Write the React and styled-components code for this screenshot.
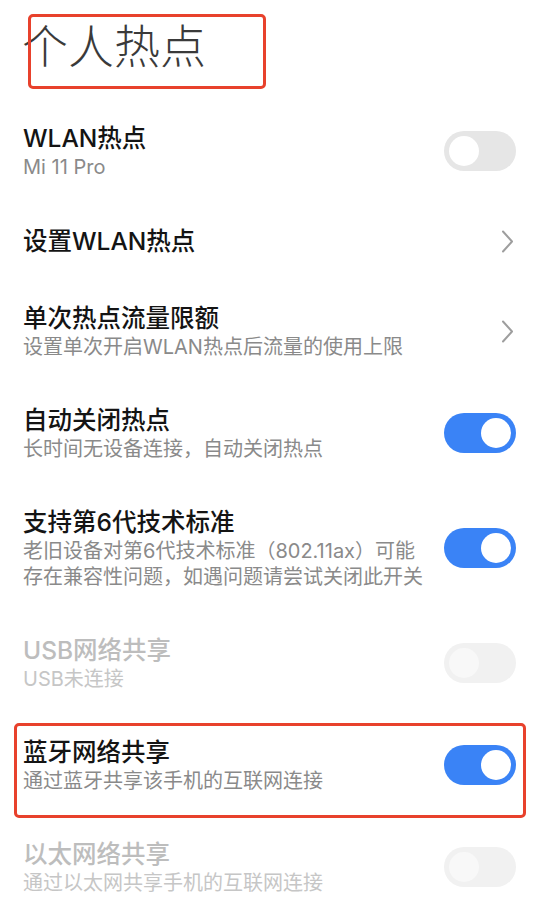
import React from "react";
import styled, { createGlobalStyle, css } from "styled-components";

const GlobalStyle = createGlobalStyle`
  html, body {
    margin: 0;
    padding: 0;
    background: #ffffff;
  }
  body {
    font-family: Inter, "Noto Sans CJK SC", "Noto Sans", sans-serif;
    -webkit-font-smoothing: antialiased;
  }
`;

const Screen = styled.div`
  width: 555px;
  min-height: 922px;
  background: #ffffff;
  overflow: hidden;
`;

const Header = styled.header`
  position: relative;
  padding: 20px 22px 34px;
`;

const PageTitle = styled.h1`
  margin: 0;
  font-family: "Noto Sans CJK SC", sans-serif;
  font-size: 46px;
  line-height: 46px;
  font-weight: 300;
  color: #3a3a3a;
  letter-spacing: 0;
`;

/* red annotation frame drawn over the content */
const Marker = styled.span`
  position: absolute;
  border: 3px solid #e8412c;
  border-radius: 5px;
  pointer-events: none;
  box-sizing: border-box;
`;

const HeaderMarker = styled(Marker)`
  left: 28px;
  top: 14px;
  width: 238px;
  height: 75px;
`;

const List = styled.div`
  display: flex;
  flex-direction: column;
`;

const Row = styled.div`
  position: relative;
  display: flex;
  align-items: center;
  gap: 16px;
  padding: 22px 39px 22px 23px;
  min-height: ${(p) => (p.$compact ? "34px" : "auto")};
`;

const RowMarker = styled(Marker)`
  left: 14px;
  right: 29px;
  top: 9px;
  bottom: -2px;
`;

const TextBlock = styled.div`
  flex: 1;
  min-width: 0;
  display: flex;
  flex-direction: column;
`;

const Title = styled.div`
  font-size: 24.5px;
  line-height: 32px;
  font-weight: 500;
  color: ${(p) => (p.$disabled ? "#bdbdbd" : "#141414")};
  white-space: nowrap;
`;

const Subtitle = styled.div`
  font-size: 20px;
  line-height: 26px;
  font-weight: 400;
  color: ${(p) => (p.$disabled ? "#c6c6c6" : "#8a8a8a")};
  white-space: nowrap;
`;

const Track = styled.div`
  flex: none;
  position: relative;
  width: 72px;
  height: 40px;
  border-radius: 20px;
  box-sizing: border-box;
  display: flex;
  align-items: center;
  padding: 0 5px;
  justify-content: ${(p) => (p.$on ? "flex-end" : "flex-start")};
  ${(p) =>
    p.$on
      ? css`
          background: #3a83f6;
        `
      : p.$disabled
      ? css`
          background: #f1f1f1;
        `
      : css`
          background: #e6e6e6;
        `}
`;

const Knob = styled.span`
  width: 30px;
  height: 30px;
  border-radius: 50%;
  background: ${(p) => (p.$disabled ? "#f8f8f8" : "#ffffff")};
`;

const ChevronBox = styled.div`
  flex: none;
  width: 24px;
  height: 24px;
  display: flex;
  align-items: center;
  justify-content: flex-end;
  margin-right: 2px;
`;

const Switch = ({ on, disabled }) => (
  <Track $on={on} $disabled={disabled}>
    <Knob $disabled={disabled} />
  </Track>
);

const Chevron = () => (
  <ChevronBox>
    <svg width="13" height="23" viewBox="0 0 13 23" fill="none">
      <path
        d="M2 1.5 L11 11.5 L2 21.5"
        stroke="#9e9e9e"
        strokeWidth="2"
        strokeLinecap="round"
        strokeLinejoin="round"
      />
    </svg>
  </ChevronBox>
);

const items = [
  { title: "WLAN热点", sub: ["Mi 11 Pro"], control: "switch", on: false },
  { title: "设置WLAN热点", control: "chevron" },
  {
    title: "单次热点流量限额",
    sub: ["设置单次开启WLAN热点后流量的使用上限"],
    control: "chevron",
  },
  {
    title: "自动关闭热点",
    sub: ["长时间无设备连接，自动关闭热点"],
    control: "switch",
    on: true,
  },
  {
    title: "支持第6代技术标准",
    sub: ["老旧设备对第6代技术标准（802.11ax）可能", "存在兼容性问题，如遇问题请尝试关闭此开关"],
    control: "switch",
    on: true,
  },
  {
    title: "USB网络共享",
    sub: ["USB未连接"],
    control: "switch",
    on: false,
    disabled: true,
  },
  {
    title: "蓝牙网络共享",
    sub: ["通过蓝牙共享该手机的互联网连接"],
    control: "switch",
    on: true,
    marked: true,
  },
  {
    title: "以太网络共享",
    sub: ["通过以太网共享手机的互联网连接"],
    control: "switch",
    on: false,
    disabled: true,
  },
];

export default function App() {
  return (
    <Screen>
      <GlobalStyle />
      <Header>
        <PageTitle>个人热点</PageTitle>
        <HeaderMarker />
      </Header>
      <List>
        {items.map((it) => (
          <Row key={it.title} $compact={!it.sub}>
            <TextBlock>
              <Title $disabled={it.disabled}>{it.title}</Title>
              {it.sub &&
                it.sub.map((line) => (
                  <Subtitle key={line} $disabled={it.disabled}>
                    {line}
                  </Subtitle>
                ))}
            </TextBlock>
            {it.control === "switch" ? (
              <Switch on={it.on} disabled={it.disabled} />
            ) : (
              <Chevron />
            )}
            {it.marked && <RowMarker />}
          </Row>
        ))}
      </List>
    </Screen>
  );
}
